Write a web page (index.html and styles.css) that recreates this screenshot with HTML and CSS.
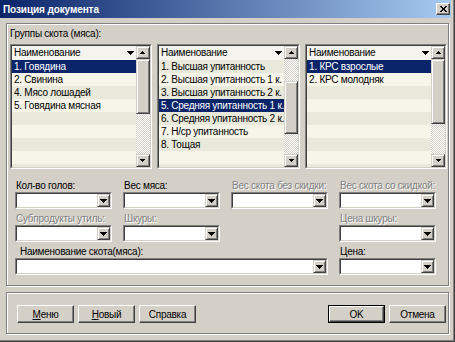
FILE: index.html
```html
<!DOCTYPE html>
<html lang="ru">
<head>
<meta charset="utf-8">
<title>Позиция документа</title>
<link rel="stylesheet" href="styles.css">
</head>
<body>
<div class="window">
  <div class="titlebar">
    <span class="title">Позиция документа</span>
    <span class="close"><svg width="7" height="6" viewBox="0 0 7 6"><path d="M0 0h2v1H0zM5 0h2v1H5zM1 1h2v1H1zM4 1h2v1H4zM2 2h3v2H2zM1 4h2v1H1zM4 4h2v1H4zM0 5h2v1H0zM5 5h2v1H5z"/></svg></span>
  </div>
  <div class="client">
    <div class="group">
      <div class="caption">Группы скота (мяса):</div>
      <div class="lists">
        <div class="list"><div class="list-in">
          <div class="list-body">
            <div class="hdr"><span>Наименование</span><svg class="ar7" width="7" height="4" viewBox="0 0 7 4"><path d="M0 0h7v1H0zM1 1h5v1H1zM2 2h3v1H2zM3 3h1v1H3z"/></svg></div>
            <div class="row sel">1. Говядина</div>
            <div class="row">2. Свинина</div>
            <div class="row">4. Мясо лошадей</div>
            <div class="row">5. Говядина мясная</div>
            <div class="row"></div>
            <div class="row"></div>
            <div class="row"></div>
            <div class="row"></div>
            <div class="row"></div>
          </div>
          <div class="vscroll">
            <div class="sbtn"><svg width="5" height="3" viewBox="0 0 5 3"><path d="M2 0h1v1H2zM1 1h3v1H1zM0 2h5v1H0z"/></svg></div>
            <div class="thumb" style="height:55px"></div>
            <div class="track"></div>
            <div class="sbtn"><svg width="5" height="3" viewBox="0 0 5 3"><path d="M0 0h5v1H0zM1 1h3v1H1zM2 2h1v1H2z"/></svg></div>
          </div>
        </div></div>

        <div class="list"><div class="list-in">
          <div class="list-body">
            <div class="hdr"><span>Наименование</span><svg class="ar7" width="7" height="4" viewBox="0 0 7 4"><path d="M0 0h7v1H0zM1 1h5v1H1zM2 2h3v1H2zM3 3h1v1H3z"/></svg></div>
            <div class="row">1. Высшая упитанность</div>
            <div class="row">2. Высшая упитанность 1 к.</div>
            <div class="row">3. Высшая упитанность 2 к.</div>
            <div class="row sel">5. Средняя упитанность 1 к.</div>
            <div class="row">6. Средняя упитанность 2 к.</div>
            <div class="row">7. Н/ср упитанность</div>
            <div class="row">8. Тощая</div>
            <div class="row"></div>
            <div class="row"></div>
          </div>
          <div class="vscroll">
            <div class="sbtn"><svg width="5" height="3" viewBox="0 0 5 3"><path d="M2 0h1v1H2zM1 1h3v1H1zM0 2h5v1H0z"/></svg></div>
            <div class="track" style="flex:0 0 22px"></div>
            <div class="thumb" style="height:53px"></div>
            <div class="track"></div>
            <div class="sbtn"><svg width="5" height="3" viewBox="0 0 5 3"><path d="M0 0h5v1H0zM1 1h3v1H1zM2 2h1v1H2z"/></svg></div>
          </div>
        </div></div>

        <div class="list"><div class="list-in">
          <div class="list-body">
            <div class="hdr"><span>Наименование</span><svg class="ar7" width="7" height="4" viewBox="0 0 7 4"><path d="M0 0h7v1H0zM1 1h5v1H1zM2 2h3v1H2zM3 3h1v1H3z"/></svg></div>
            <div class="row sel">1. КРС взрослые</div>
            <div class="row">2. КРС молодняк</div>
            <div class="row"></div>
            <div class="row"></div>
            <div class="row"></div>
            <div class="row"></div>
            <div class="row"></div>
            <div class="row"></div>
            <div class="row"></div>
          </div>
          <div class="vscroll">
            <div class="sbtn"><svg width="5" height="3" viewBox="0 0 5 3"><path d="M2 0h1v1H2zM1 1h3v1H1zM0 2h5v1H0z"/></svg></div>
            <div class="thumb" style="height:65px"></div>
            <div class="track"></div>
            <div class="sbtn"><svg width="5" height="3" viewBox="0 0 5 3"><path d="M0 0h5v1H0zM1 1h3v1H1zM2 2h1v1H2z"/></svg></div>
          </div>
        </div></div>
      </div>

      <div class="form">
        <div class="cell">
          <div class="lbl">Кол-во голов:</div>
          <div class="combo"><div class="combo-in"><div class="field"></div><div class="dd"><svg width="7" height="4" viewBox="0 0 7 4"><path d="M0 0h7v1H0zM1 1h5v1H1zM2 2h3v1H2zM3 3h1v1H3z"/></svg></div></div></div>
        </div>
        <div class="cell">
          <div class="lbl">Вес мяса:</div>
          <div class="combo"><div class="combo-in"><div class="field"></div><div class="dd"><svg width="7" height="4" viewBox="0 0 7 4"><path d="M0 0h7v1H0zM1 1h5v1H1zM2 2h3v1H2zM3 3h1v1H3z"/></svg></div></div></div>
        </div>
        <div class="cell">
          <div class="lbl off">Вес скота без скидки:</div>
          <div class="combo"><div class="combo-in"><div class="field"></div><div class="dd"><svg width="7" height="4" viewBox="0 0 7 4"><path d="M0 0h7v1H0zM1 1h5v1H1zM2 2h3v1H2zM3 3h1v1H3z"/></svg></div></div></div>
        </div>
        <div class="cell">
          <div class="lbl off">Вес скота со скидкой:</div>
          <div class="combo"><div class="combo-in"><div class="field"></div><div class="dd"><svg width="7" height="4" viewBox="0 0 7 4"><path d="M0 0h7v1H0zM1 1h5v1H1zM2 2h3v1H2zM3 3h1v1H3z"/></svg></div></div></div>
        </div>

        <div class="cell">
          <div class="lbl off">Субпродукты утиль:</div>
          <div class="combo"><div class="combo-in"><div class="field"></div><div class="dd"><svg width="7" height="4" viewBox="0 0 7 4"><path d="M0 0h7v1H0zM1 1h5v1H1zM2 2h3v1H2zM3 3h1v1H3z"/></svg></div></div></div>
        </div>
        <div class="cell">
          <div class="lbl off">Шкуры:</div>
          <div class="combo"><div class="combo-in"><div class="field"></div><div class="dd"><svg width="7" height="4" viewBox="0 0 7 4"><path d="M0 0h7v1H0zM1 1h5v1H1zM2 2h3v1H2zM3 3h1v1H3z"/></svg></div></div></div>
        </div>
        <div class="cell"></div>
        <div class="cell">
          <div class="lbl off">Цена шкуры:</div>
          <div class="combo"><div class="combo-in"><div class="field"></div><div class="dd"><svg width="7" height="4" viewBox="0 0 7 4"><path d="M0 0h7v1H0zM1 1h5v1H1zM2 2h3v1H2zM3 3h1v1H3z"/></svg></div></div></div>
        </div>

        <div class="cell wide">
          <div class="lbl indent">Наименование скота(мяса):</div>
          <div class="combo"><div class="combo-in"><div class="field"></div><div class="dd"><svg width="7" height="4" viewBox="0 0 7 4"><path d="M0 0h7v1H0zM1 1h5v1H1zM2 2h3v1H2zM3 3h1v1H3z"/></svg></div></div></div>
        </div>
        <div class="cell">
          <div class="lbl">Цена:</div>
          <div class="combo"><div class="combo-in"><div class="field"></div><div class="dd"><svg width="7" height="4" viewBox="0 0 7 4"><path d="M0 0h7v1H0zM1 1h5v1H1zM2 2h3v1H2zM3 3h1v1H3z"/></svg></div></div></div>
        </div>
      </div>
    </div>

    <div class="panel">
      <div class="btns">
        <div class="btn"><u>М</u>еню</div>
        <div class="btn"><u>Н</u>овый</div>
        <div class="btn">Справка</div>
      </div>
      <div class="btns">
        <div class="btn def"><div class="btn-in">OK</div></div>
        <div class="btn">Отмена</div>
      </div>
    </div>
  </div>
</div>
</body>
</html>
```

FILE: styles.css
```css
* { box-sizing: border-box; }
html, body { margin: 0; padding: 0; background: #d4d0c8; }
body {
  width: 455px;
  height: 342px;
  overflow: hidden;
  font-family: "Liberation Sans", Arial, sans-serif;
  font-size: 10px;
  letter-spacing: -0.25px;
  color: #000;
}
svg { display: block; fill: #000; shape-rendering: crispEdges; }

.window {
  width: 455px;
  height: 342px;
  background: #d4d0c8;
  border-right: 1px solid #404040;
  border-bottom: 1px solid #404040;
  padding: 0 3px 3px 0;
  box-shadow: inset -1px -1px 0 #808080;
  display: flex;
  flex-direction: column;
}

.titlebar {
  height: 18px;
  flex: 0 0 18px;
  background: linear-gradient(to right, #0a246a, #a6caf0);
  display: flex;
  align-items: center;
  justify-content: space-between;
  padding: 0 1px 0 3px;
  color: #fff;
  font-weight: bold;
  font-size: 10px;
  letter-spacing: -0.1px;
}
.close {
  width: 14px;
  height: 12px;
  background: #d4d0c8;
  border: 1px solid;
  border-color: #fff #404040 #404040 #fff;
  box-shadow: inset -1px -1px 0 #808080;
  display: flex;
  align-items: center;
  justify-content: center;
}

.client { padding: 5px 0 0 6px; }

.group {
  width: 443px;
  height: 263px;
  border: 1px solid #808080;
  box-shadow: inset 1px 1px 0 #fff, 1px 1px 0 #fff;
  padding: 3px 1px 0 3px;
}
.caption { line-height: 14px; height: 13px; }

.lists {
  margin-top: 4px;
  display: grid;
  grid-template-columns: repeat(3, 1fr);
  column-gap: 5px;
}
.list {
  height: 125px;
  border: 1px solid;
  border-color: #808080 #fff #fff #808080;
}
.list-in {
  height: 100%;
  border: 1px solid;
  border-color: #404040 #d4d0c8 #d4d0c8 #404040;
  display: flex;
  background: #f7f5ea;
}
.list-body { flex: 1; min-width: 0; overflow: hidden; }
.hdr {
  height: 14px;
  background: #f4f3ee;
  display: flex;
  align-items: center;
  justify-content: space-between;
  padding: 0 2px 0 2px;
  line-height: 14px;
}
.row {
  height: 13px;
  line-height: 13px;
  padding-left: 2px;
  white-space: nowrap;
  background: #f7f5ea;
}
.row:nth-child(even) { background: #e8e9da; }
.row.sel { background: #0a246a; color: #fff; }

.vscroll {
  width: 14px;
  flex: 0 0 14px;
  display: flex;
  flex-direction: column;
}
.sbtn, .thumb {
  background: #d4d0c8;
  border: 1px solid;
  border-color: #d4d0c8 #404040 #404040 #d4d0c8;
  box-shadow: inset 1px 1px 0 #fff, inset -1px -1px 0 #808080;
}
.sbtn {
  height: 13px;
  flex: 0 0 13px;
  display: flex;
  align-items: center;
  justify-content: center;
}
.thumb { flex: 0 0 auto; }
.track {
  flex: 1;
  background: repeating-conic-gradient(#d4d0c8 0 25%, #fff 0 50%) 0 0 / 2px 2px;
}

.form {
  margin: 10px 0 0 5px;
  display: grid;
  grid-template-columns: repeat(4, 97px);
  column-gap: 11px;
  row-gap: 3px;
}
.cell.wide { grid-column: 1 / 4; }
.lbl {
  height: 13px;
  line-height: 13px;
  padding-left: 1px;
  white-space: nowrap;
}
.lbl.off { color: #808080; text-shadow: 1px 1px 0 #fff; }
.lbl.indent { padding-left: 5px; }

.combo {
  height: 17px;
  border: 1px solid;
  border-color: #808080 #fff #fff #808080;
}
.combo-in {
  height: 100%;
  border: 1px solid;
  border-color: #404040 #d4d0c8 #d4d0c8 #404040;
  background: #fff;
  display: flex;
}
.field { flex: 1; }
.dd {
  width: 13px;
  flex: 0 0 13px;
  background: #d4d0c8;
  border: 1px solid;
  border-color: #d4d0c8 #404040 #404040 #d4d0c8;
  box-shadow: inset 1px 1px 0 #fff, inset -1px -1px 0 #808080;
  display: flex;
  align-items: center;
  justify-content: center;
}

.panel {
  margin-top: 6px;
  width: 443px;
  height: 42px;
  border: 1px solid #808080;
  box-shadow: inset 1px 1px 0 #fff, 1px 1px 0 #fff;
  padding: 12px 2px 0 10px;
  display: flex;
  justify-content: space-between;
  align-items: flex-start;
}
.btns { display: flex; gap: 4px; }
.btn {
  width: 57px;
  height: 18px;
  background: #d4d0c8;
  border: 1px solid;
  border-color: #fff #404040 #404040 #fff;
  box-shadow: inset -1px -1px 0 #808080;
  display: flex;
  align-items: center;
  justify-content: center;
  line-height: 13px;
}
.btn.def {
  border: 1px solid #000;
  box-shadow: none;
  padding: 0;
}
.btn-in {
  width: 100%;
  height: 100%;
  border: 1px solid;
  border-color: #fff #404040 #404040 #fff;
  box-shadow: inset -1px -1px 0 #808080;
  display: flex;
  align-items: center;
  justify-content: center;
}
```
